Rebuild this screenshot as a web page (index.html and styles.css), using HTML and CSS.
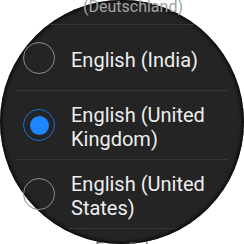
FILE: index.html
```html
<!DOCTYPE html>
<html>
<head>
<meta charset="utf-8">
<link rel="stylesheet" href="styles.css">
</head>
<body>
<div class="screen">
  <div class="list">
    <div class="prev">(Deutschland)</div>
    <div class="sep sep-top"></div>
    <div class="row row-short">
      <span class="radio"></span>
      <span class="label">English (India)</span>
    </div>
    <div class="sep"></div>
    <div class="row">
      <span class="radio checked"><span class="dot"></span></span>
      <span class="label">English (United Kingdom)</span>
    </div>
    <div class="sep"></div>
    <div class="row">
      <span class="radio"></span>
      <span class="label">English (United States)</span>
    </div>
    <div class="sep sep-bottom"></div>
    <div class="next">
      <span class="next-label">Español</span>
    </div>
  </div>
</div>
</body>
</html>
```
FILE: styles.css
```css
html, body {
  margin: 0;
  padding: 0;
  background: #ffffff;
  width: 244px;
  height: 244px;
  overflow: hidden;
}
.screen {
  width: 244px;
  height: 244px;
  border-radius: 50%;
  background: #242424;
  box-shadow: inset 0 0 4px 1px #000;
  font-family: Roboto, "Noto Sans", sans-serif;
  color: #eeeeee;
}
.list {
  display: flex;
  flex-direction: column;
}
.prev {
  height: 25px;
  padding-left: 83px;
  font-size: 16px;
  line-height: 16px;
  margin-top: -1px;
  color: #a4a4a4;
}
.sep {
  height: 1px;
  margin: 0 16px;
  background: #363636;
}
.sep-top {
  margin: 0 50px;
}
.sep-bottom {
  margin: 0 68px;
}
.row {
  margin: 0 16px;
  height: 68px;
  display: flex;
  align-items: center;
  gap: 16px;
  padding-left: 7px;
  padding-right: 14px;
}
.row-short {
  height: 65px;
}
.radio {
  flex: none;
  width: 30px;
  height: 30px;
  border: 1.5px solid #8c8c8c;
  border-radius: 50%;
  display: flex;
  align-items: center;
  justify-content: center;
}
.radio.checked {
  border-color: #1a6fd6;
}
.dot {
  width: 19px;
  height: 19px;
  border-radius: 50%;
  background: #1f86ff;
}
.label {
  font-size: 20px;
  line-height: 24px;
  padding-top: 4px;
}
.next {
  height: 20px;
  display: flex;
  justify-content: center;
}
.next-label {
  font-size: 15px;
  line-height: 17px;
  color: #707070;
  padding-top: 11px;
}
```
